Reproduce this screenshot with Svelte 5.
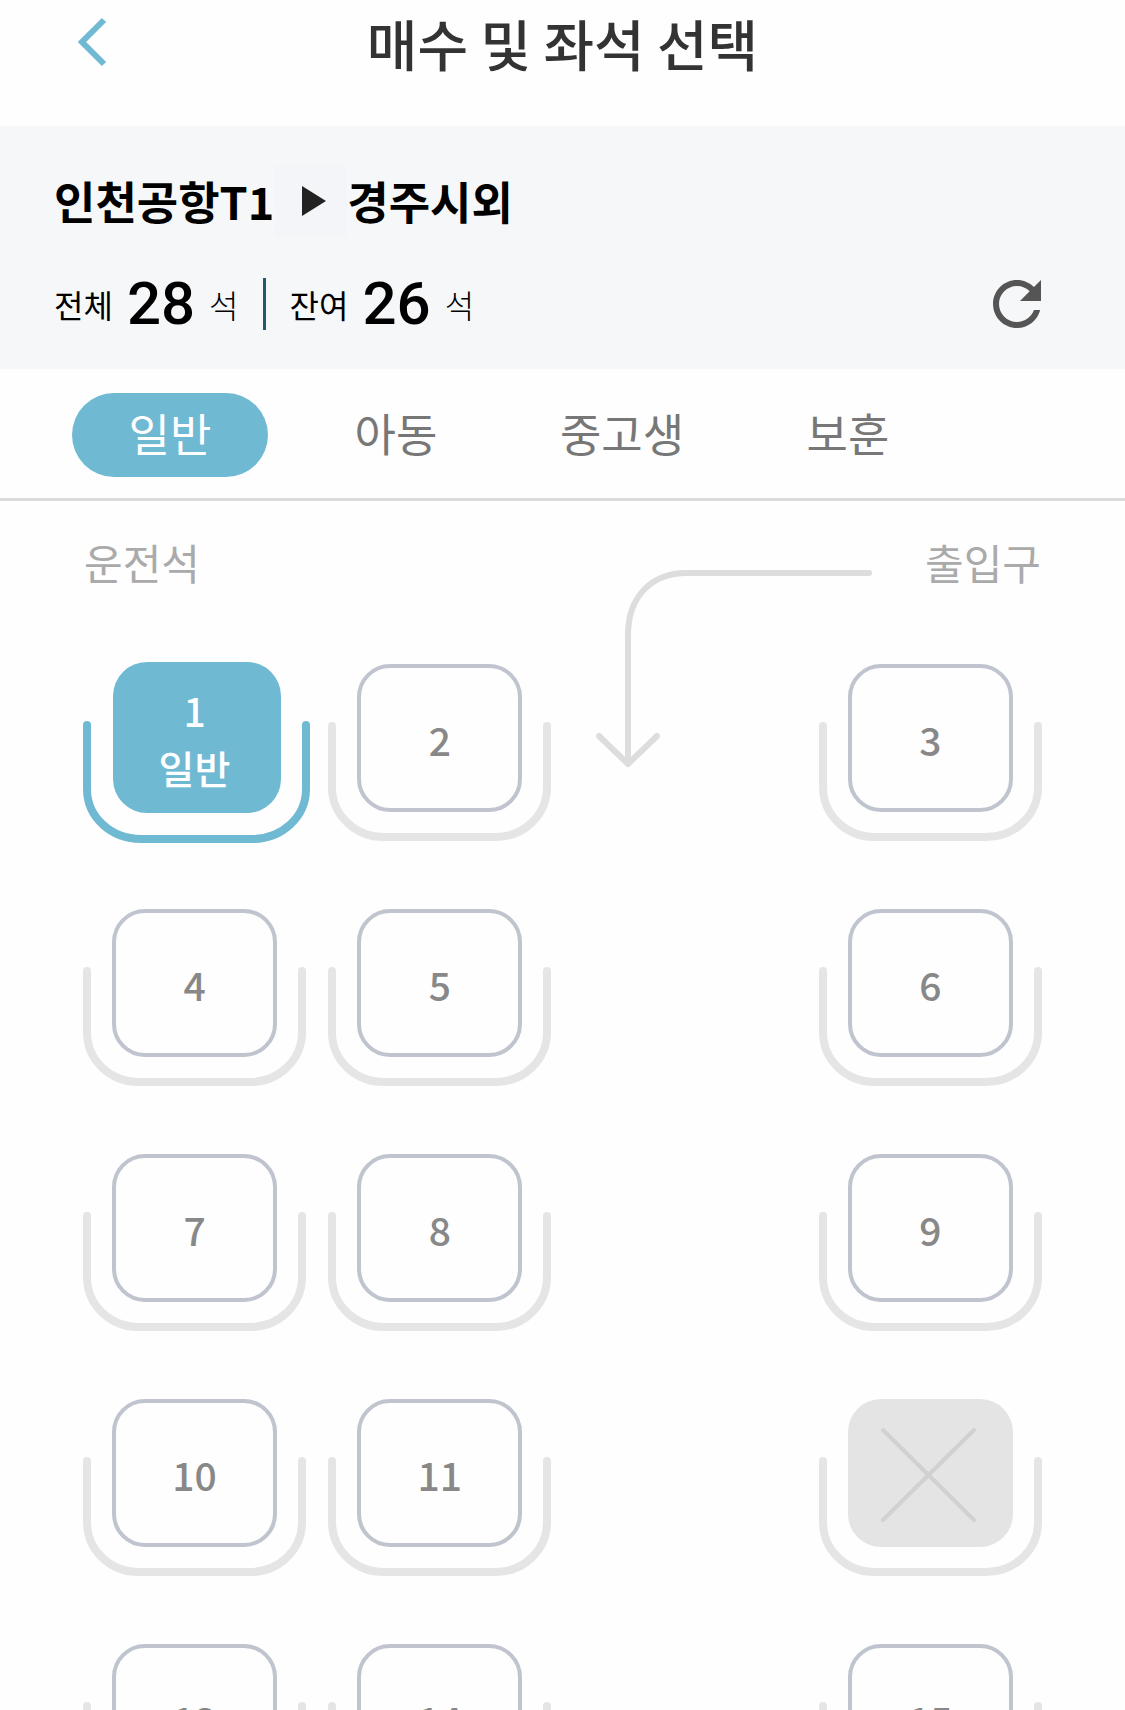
<script>
    const tipos = ['일반', '아동', '중고생', '보훈'];
    const total = 28;
    const restantes = 26;

    // null = corredor
    const fileiras = [
        [1, 2, null, 3],
        [4, 5, null, 6],
        [7, 8, null, 9],
        [10, 11, null, 12],
        [13, 14, null, 15]
    ];
    const ocupados = [12];

    let tipo = '일반';
    let escolhidos = { 1: '일반' };

    function alternar(n) {
        if (escolhidos[n]) {
            delete escolhidos[n];
            escolhidos = escolhidos;
        } else {
            escolhidos = { ...escolhidos, [n]: tipo };
        }
    }

    function limpar() {
        escolhidos = {};
    }
</script>

<div class="pagina">
    <header>
        <button class="voltar" aria-label="뒤로">
            <svg width="34" height="52" viewBox="0 0 34 52">
                <path d="M30 4L8 26L30 48" fill="none" stroke="#6fb9d3" stroke-width="6" />
            </svg>
        </button>
        <h1>매수 및 좌석 선택</h1>
    </header>

    <section class="resumo">
        <div class="rota">
            <strong>인천공항T1</strong>
            <svg class="seta" width="72" height="72" viewBox="0 0 72 72"><path d="M27 21L51 36L27 51z" fill="#222" /></svg>
            <strong>경주시외</strong>
        </div>
        <div class="contagem">
            <span>전체</span>
            <b>{total}</b>
            <span class="unidade">석</span>
            <i class="divisor"></i>
            <span>잔여</span>
            <b>{restantes}</b>
            <span class="unidade">석</span>
            <button class="atualizar" aria-label="새로고침" on:click={limpar}>
                <svg width="72" height="72" viewBox="0 0 24 24">
                    <path fill="#555" d="M17.65 6.35C16.2 4.9 14.21 4 12 4c-4.42 0-7.99 3.58-7.99 8s3.57 8 7.99 8c3.73 0 6.84-2.55 7.73-6h-2.08c-.82 2.33-3.04 4-5.65 4-3.31 0-6-2.69-6-6s2.69-6 6-6c1.66 0 3.14.69 4.22 1.78L13 11h7V4l-2.35 2.35z" />
                </svg>
            </button>
        </div>
    </section>

    <nav>
        {#each tipos as t}
            <button class="aba" class:ativa={t === tipo} aria-pressed={t === tipo} on:click={() => (tipo = t)}>{t}</button>
        {/each}
    </nav>

    <main>
        <div class="frente">
            <span>운전석</span>
            <span>출입구</span>
            <svg class="entrada" width="280" height="204" viewBox="0 0 280 204">
                <path d="M274 7H92C56 7 33 31 33 69V196M4 170L33 198L62 170" fill="none" stroke="#ddd" stroke-width="6" stroke-linecap="round" stroke-linejoin="round" />
            </svg>
        </div>

        <div class="assentos">
            {#each fileiras as fileira}
                {#each fileira as n}
                    {#if n === null}
                        <span></span>
                    {:else if ocupados.includes(n)}
                        <button class="assento" disabled aria-label="{n} 선택 불가">
                            <svg viewBox="0 0 228 182">
                                <path class="base" d="M4 64V125C4 153 27 175 56 175H167C196 175 219 153 219 125V64" />
                                <rect x="29" y="2" width="165" height="148" rx="33" fill="#e4e4e4" />
                                <path d="M64 33L155 123M155 33L64 123" stroke="#d2d0d1" stroke-width="4" stroke-linecap="round" />
                            </svg>
                        </button>
                    {:else if escolhidos[n]}
                        <button class="assento escolhido" aria-pressed="true" on:click={() => alternar(n)}>
                            <svg viewBox="0 0 228 182">
                                <path class="base" d="M4 63V127C4 155 28 177 58 177H169C199 177 223 155 223 127V63" />
                                <rect x="30" y="0" width="168" height="151" rx="34" fill="#6fb9d3" />
                            </svg>
                            <span class="rotulo">{n}<br />{escolhidos[n]}</span>
                        </button>
                    {:else}
                        <button class="assento" aria-pressed="false" on:click={() => alternar(n)}>
                            <svg viewBox="0 0 228 182">
                                <path class="base" d="M4 64V125C4 153 27 175 56 175H167C196 175 219 153 219 125V64" />
                                <rect x="31" y="4" width="161" height="144" rx="31" fill="#fefefe" stroke="#bfc4ce" stroke-width="4" />
                            </svg>
                            <span class="rotulo">{n}</span>
                        </button>
                    {/if}
                {/each}
            {/each}
        </div>
    </main>
</div>

<style>
    :global(body) {
        background: #fefefe;
    }

    .pagina {
        height: 100vh;
        overflow-y: auto;
        scrollbar-width: none;
        font-family: "Noto Sans CJK KR", "Noto Sans", sans-serif;
        color: #000;
    }

    button {
        padding: 0;
        border: none;
        background: none;
        font-family: inherit;
        cursor: pointer;
    }

    svg {
        display: block;
    }

    header {
        display: grid;
        grid-template-columns: 1fr auto 1fr;
        align-items: center;
        height: 84px;
        padding: 0 74px 42px;
    }
    h1 {
        margin: 0;
        font-size: 55px;
        line-height: 84px;
        font-weight: 500;
        color: #333;
    }
    .voltar {
        justify-self: start;
    }

    .resumo {
        padding: 39px 72px 29px 54px;
        background: #f6f7f9;
    }
    .rota {
        display: flex;
        align-items: center;
        height: 72px;
        margin-bottom: 31px;
        font-size: 45px;
        line-height: 72px;
    }
    .seta {
        margin-left: 1px;
        background: #f4f5f8;
    }
    .contagem {
        display: flex;
        align-items: center;
        height: 72px;
        font-size: 32px;
        line-height: 72px;
    }
    .contagem b {
        margin: 0 14px;
        font-family: Roboto, sans-serif;
        font-size: 60px;
        font-weight: 500;
    }
    .unidade {
        font-weight: 300;
    }
    .divisor {
        width: 3px;
        height: 52px;
        margin: 0 24px;
        background: #215a68;
    }
    .atualizar {
        margin-left: auto;
    }

    nav {
        display: flex;
        gap: 30px;
        padding: 24px 72px 21px;
        border-bottom: 3px solid #dadada;
    }
    .aba {
        width: 196px;
        height: 84px;
        padding-bottom: 5px;
        border-radius: 42px;
        font-size: 45px;
        color: #777;
    }
    .aba.ativa {
        background: #6fb9d3;
        color: #fff;
    }

    .frente {
        position: relative;
        display: flex;
        justify-content: space-between;
        height: 128px;
        padding: 33px 84px 0;
        font-size: 42px;
        line-height: 56px;
        color: #aaa;
    }
    /* passa por cima do corredor */
    .entrada {
        position: absolute;
        top: 65px;
        right: 250px;
    }

    .assentos {
        display: grid;
        grid-template-columns: repeat(4, 1fr);
        row-gap: 63px;
        padding: 0 61px 63px 83px;
    }
    .assento {
        display: grid;
        justify-self: start;
        width: 228px;
        height: 182px;
        font-size: 39px;
        line-height: 57px;
        font-weight: 500;
        color: #888;
    }
    .assento svg,
    .rotulo {
        grid-area: 1 / 1;
    }
    .assento svg {
        width: 228px;
        height: 182px;
    }
    .rotulo {
        align-self: center;
        width: 223px;
        margin-bottom: 28px;
    }
    .base {
        fill: none;
        stroke: #e5e5e5;
        stroke-width: 8;
        stroke-linecap: round;
    }
    .escolhido {
        color: #fff;
    }
    .escolhido .base {
        stroke: #6fb9d3;
    }
</style>
